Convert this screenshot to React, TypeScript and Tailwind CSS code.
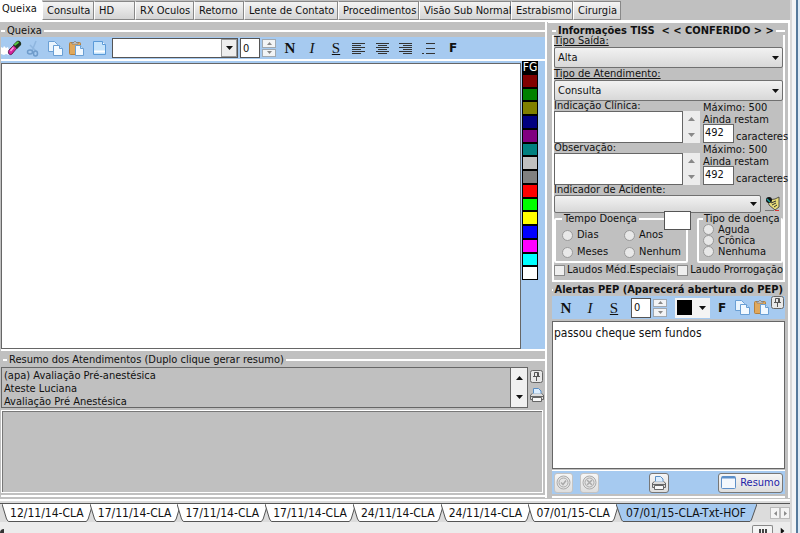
import React from "react";

const tabs = [
  ["Consulta", "w-[52px]"],
  ["HD", "w-[41px]"],
  ["RX Oculos", "w-[59px]"],
  ["Retorno", "w-[50px]"],
  ["Lente de Contato", "w-[94px]"],
  ["Procedimentos", "w-[81px]"],
  ["Visão Sub Normal", "w-[92px]"],
  ["Estrabismo", "w-[62px]"],
  ["Cirurgia", "w-[48px]"],
];

const palette = [
  "bg-[#800000]", "bg-[#008000]", "bg-[#808000]", "bg-[#000080]", "bg-[#800080]",
  "bg-[#008080]", "bg-[#c0c0c0]", "bg-[#808080]", "bg-[#ff0000]", "bg-[#00ff00]",
  "bg-[#ffff00]", "bg-[#0000ff]", "bg-[#ff00ff]", "bg-[#00ffff]", "bg-white",
];

const visits = [
  "12/11/14-CLA", "17/11/14-CLA", "17/11/14-CLA", "17/11/14-CLA",
  "24/11/14-CLA", "24/11/14-CLA", "07/01/15-CLA",
];

function CopyIcon() {
  return (
    <svg width="17" height="17" viewBox="0 0 17 17" stroke="#6a9fd4">
      <path d="M1.5 1.5h6l3 3v7h-9z" fill="#eaf4fd" />
      <path d="M6.5 5.5h6l3 3v7h-9z" fill="#f4faff" />
      <path d="M12.5 5.5v3h3" fill="#b9dcf8" />
    </svg>
  );
}

function PasteIcon() {
  return (
    <svg width="17" height="17" viewBox="0 0 17 17">
      <rect x="1.5" y="2.5" width="11" height="12" rx="1" fill="#e0a85c" stroke="#b5803c" />
      <path d="M4 4V2.5h2L7 1l1 1.5h2V4z" fill="#d8d8d8" stroke="#777" strokeWidth=".7" />
      <path d="M7.5 5.5h5l3 3v7h-8z" fill="#f1f8ff" stroke="#6a9fd4" />
      <path d="M12.5 5.5v3h3" fill="#b9dcf8" stroke="#6a9fd4" />
    </svg>
  );
}

function PinIcon() {
  return (
    <svg width="13" height="13" viewBox="0 0 13 13" fill="none" stroke="#555">
      <rect x=".5" y=".5" width="12" height="12" rx="2" fill="#e8e8e8" stroke="#666" />
      <path d="M4.5 2.5h4v4h-4zM3 6.5h7M6.5 7v4M7.5 3v3" />
    </svg>
  );
}

function PrinterIcon() {
  return (
    <svg width="16" height="16" viewBox="0 0 16 16" stroke="#666">
      <path d="M4.5 7V1.5h5l2.5 2.5v3z" fill="#dceeff" stroke="#5a8fc4" />
      <path d="M3.5 6.5L1.5 8v4.5h13V8l-2-1.5" fill="#dcdcdc" />
      <path d="M1.5 9.5h13" />
      <path d="M3.5 10.5h9v4h-9z" fill="#f8f8f8" />
    </svg>
  );
}

function EraserIcon() {
  return (
    <svg width="21" height="18" viewBox="0 0 21 18">
      <path d="M0 8l2 1 1-2 2 2 2-1 1 3-1 3 1 2-3-1-2 1-3-1z" fill="#fff" />
      <path d="M8 11l5-5 3 3-5 6c-2 2-5-1-3-4z" fill="#d6249c" stroke="#501040" strokeWidth=".8" />
      <path d="M12 6l4-4c2-1 5 1 4 4l-4 4z" fill="#223322" />
      <path d="M13.5 6l4-3" stroke="#58c83c" strokeWidth="2" />
      <path d="M9.5 12l3-3.5" stroke="#ff9ade" strokeWidth="1.5" />
    </svg>
  );
}

function ScissorsIcon() {
  return (
    <svg width="14" height="17" viewBox="0 0 14 17" fill="none" stroke="#6f9ccb" strokeWidth="1.5">
      <path d="M10 1L6 11M4 5l6 6" stroke="#8fb6df" />
      <ellipse cx="4" cy="12" rx="2.5" ry="2" />
      <ellipse cx="9.5" cy="13.5" rx="2" ry="2.5" />
    </svg>
  );
}

function PageIcon() {
  return (
    <svg width="15" height="16" viewBox="0 0 15 16" stroke="#5a9ad8">
      <path d="M1.5 1.5h9l3 3v10h-12z" fill="#c5e3fb" />
      <path d="M10.5 1.5v3h3" fill="#fff" />
      <path d="M2 11.5h11" stroke="#fff" strokeWidth="2" />
    </svg>
  );
}

function HandIcon() {
  return (
    <svg width="16" height="16" viewBox="0 0 16 16">
      <path d="M3 4l7-1 4-2v10l-4 3-6-5z" fill="#e8dc78" stroke="#333" strokeWidth=".8" />
      <path d="M6 7l5-2M7 9l4-2M9 11l3-2" stroke="#333" />
      <circle cx="4" cy="4" r="3" fill="#111" />
      <path d="M2 3l3 3" stroke="#18a0a0" strokeWidth="1.5" />
      <path d="M0 14.5h9" stroke="#777" />
      <path d="M10 14.5h4" stroke="#d33" />
    </svg>
  );
}

function SealIcon({ d }: { d: string }) {
  return (
    <svg width="15" height="15" viewBox="0 0 15 15" fill="none" stroke="#aaa">
      <circle cx="7.5" cy="7.5" r="6.5" fill="#e4e4e4" />
      <circle cx="7.5" cy="7.5" r="4.5" />
      <path d={d} strokeWidth="1.5" />
    </svg>
  );
}

function WindowIcon() {
  return (
    <svg width="15" height="13" viewBox="0 0 15 13">
      <rect x=".5" y=".5" width="14" height="12" rx="1" fill="#f4f8fd" stroke="#5d8fc8" />
      <path d="M1 1.5h13" stroke="#5d8fc8" strokeWidth="2" />
    </svg>
  );
}

function AlignIcon({ d }: { d: string }) {
  return (
    <svg width="13" height="13" viewBox="0 0 13 13" stroke="#333">
      <path d={d} />
    </svg>
  );
}

function Arrow({ up = false, small = false, light = false }: { up?: boolean; small?: boolean; light?: boolean }) {
  return (
    <svg width={small ? 5 : 7} height={small ? 3 : 4} viewBox="0 0 7 4" className={up ? "rotate-180" : ""}>
      <path d="M0 0h7L3.5 4z" fill={light ? "#888" : "#111"} />
    </svg>
  );
}

function Spinner() {
  return (
    <div className="flex h-[18px] w-[14px] flex-col gap-px">
      <button aria-label="Aumentar" className="flex flex-1 items-center justify-center border border-[#a0a8b0] bg-[#f2f4f6]"><Arrow up small light /></button>
      <button aria-label="Diminuir" className="flex flex-1 items-center justify-center border border-[#a0a8b0] bg-[#f2f4f6]"><Arrow small light /></button>
    </div>
  );
}

function Title({ children, bold = false }: { children: React.ReactNode; bold?: boolean }) {
  return (
    <div className="flex items-center gap-0.5">
      <span className="h-0.5 w-1 bg-white" />
      <h2 className={bold ? "leading-[13px] font-bold whitespace-pre" : "leading-[13px] whitespace-pre"}>{children}</h2>
      <span className="h-0.5 flex-1 bg-white" />
    </div>
  );
}

function Combo({ id, value, className }: { id: string; value: string; className: string }) {
  return (
    <div className={"relative " + className}>
      <select id={id} className="h-full w-full appearance-none rounded-[2px] border border-[#707070] bg-linear-to-b from-[#f2f2f2] to-[#d8d8d8] px-[3px]">
        <option>{value}</option>
      </select>
      <span className="pointer-events-none absolute inset-y-0 right-1 flex items-center"><Arrow /></span>
    </div>
  );
}

function Notes({ id, label }: { id: string; label: string }) {
  return (
    <div className="flex">
      <div className="flex w-[146px] shrink-0 flex-col">
        <label htmlFor={id} className="block h-[10px] leading-[10px]">{label}</label>
        <div className="flex h-8">
          <textarea id={id} className="min-w-0 flex-1 resize-none border border-[#666] bg-white" />
          <div className="flex w-[17px] flex-col items-center justify-between bg-[#ececec] py-1.5">
            <Arrow up light />
            <Arrow light />
          </div>
        </div>
      </div>
      <div className="ml-[3px] flex min-w-0 flex-1 flex-col whitespace-nowrap">
        <span className="h-3 leading-[14px]">Máximo: 500</span>
        <span className="h-[11px] leading-[13px]">Ainda restam</span>
        <label className="flex h-[19px] items-end gap-0.5 leading-3">
          <input defaultValue="492" className="h-[19px] w-[31px] shrink-0 border border-[#666] bg-white px-px pb-0.5" />
          caracteres
        </label>
      </div>
    </div>
  );
}

function Radio({ name, label }: { name: string; label: string }) {
  return (
    <label className="flex items-center gap-1">
      <input type="radio" name={name} className="size-[11px] appearance-none rounded-full border border-[#999] bg-[#e8e8e8] checked:bg-[#336]" />
      {label}
    </label>
  );
}

function Check({ label }: { label: string }) {
  return (
    <label className="flex items-center gap-0.5">
      <input type="checkbox" className="size-[11px] appearance-none border border-[#8a8a8a] bg-[#efefef] checked:bg-[#336]" />
      {label}
    </label>
  );
}

function VisitTab({ label, active = false }: { label: string; active?: boolean }) {
  return (
    <button className={active ? "relative h-[18px] w-[138px]" : "relative h-[18px] min-w-0 flex-1"}>
      <svg className="absolute inset-y-0 -left-px h-full w-[calc(100%+3px)]" viewBox="0 0 100 18" preserveAspectRatio="none">
        <path
          d={active ? "M0 0L4 16l1 1.5h90l1-1.5L100 0" : "M0 0L5 15l2 2.5h86l2-2.5L100 0"}
          fill={active ? "#a6caf0" : "#fff"}
          stroke="#555"
          vectorEffect="non-scaling-stroke"
        />
      </svg>
      <span className="relative whitespace-nowrap">{label}</span>
    </button>
  );
}

const letter = "w-[14px] text-center font-['Liberation_Serif',serif] text-[15px] leading-4";
const plate = "flex h-5 items-center justify-center rounded-[3px] border bg-linear-to-b from-[#f6f6f6] to-[#dedede]";

export default function App() {
  return (
    <div className="flex h-screen overflow-hidden bg-[#ececec] font-['DejaVu_Sans_Condensed','DejaVu_Sans',sans-serif] text-[11px] leading-3 text-[#111]">
      <div className="flex min-w-0 flex-1 flex-col">
        <nav className="flex h-[22px] items-start border-b-2 border-white bg-[#c0c0c0]">
          <button className="h-5 w-[42px] bg-white pb-0.5 pl-0.5 text-left">Queixa</button>
          {tabs.map(([label, width]) => (
            <button key={label} className={"mt-px h-[19px] border border-[#888] border-l-white bg-linear-to-b from-[#f4f4f4] to-[#d4d4d4] pl-1 text-left whitespace-nowrap " + width}>
              {label}
            </button>
          ))}
        </nav>

        <main className="flex min-h-0 flex-1 border-b-2 border-white bg-[#c0c0c0] pb-px">
          <section className="flex min-w-0 flex-1 flex-col border-r-2 border-white pl-px">
            <div className="pt-0.5"><Title>Queixa</Title></div>
            <div className="flex h-6 items-center border-b-2 border-white bg-[#a6caf0]">
              <button aria-label="Apagar"><EraserIcon /></button>
              <button aria-label="Recortar" className="ml-1"><ScissorsIcon /></button>
              <button aria-label="Copiar" className="ml-[7px]"><CopyIcon /></button>
              <button aria-label="Colar" className="ml-1"><PasteIcon /></button>
              <button aria-label="Página" className="ml-[7px]"><PageIcon /></button>
              <div className="relative ml-[5px] h-5 w-[126px]">
                <select aria-label="Fonte" className="h-full w-full appearance-none border border-[#555] bg-white"><option></option></select>
                <span className="pointer-events-none absolute inset-y-px right-px flex w-4 items-center justify-center border border-[#999] bg-[#eee]"><Arrow /></span>
              </div>
              <input aria-label="Tamanho" defaultValue="0" className="ml-0.5 h-5 w-5 border border-[#555] bg-white px-0.5" />
              <div className="ml-0.5"><Spinner /></div>
              <button className={"ml-[7px] font-bold " + letter}>N</button>
              <button className={"ml-2 italic " + letter}>I</button>
              <button className={"ml-2.5 underline " + letter}>S</button>
              <button aria-label="Esquerda" className="ml-[9px]"><AlignIcon d="M0 1.5h13M0 3.5h9M0 5.5h13M0 7.5h9M0 9.5h13M0 11.5h9" /></button>
              <button aria-label="Centro" className="ml-[11px]"><AlignIcon d="M0 1.5h13M2 3.5h9M0 5.5h13M2 7.5h9M0 9.5h13M2 11.5h9" /></button>
              <button aria-label="Direita" className="ml-2.5"><AlignIcon d="M0 1.5h13M4 3.5h9M0 5.5h13M4 7.5h9M0 9.5h13M4 11.5h9" /></button>
              <button aria-label="Lista" className="ml-2.5"><AlignIcon d="M4 1.5h9M4 6.5h9M4 11.5h9M0 11.5h2" /></button>
              <button className="ml-2.5 w-4 font-['DejaVu_Sans',sans-serif] text-[12px] font-bold">F</button>
            </div>
            <div className="flex min-h-0 flex-1 bg-[#a6caf0]">
              <div className="flex min-w-0 flex-1 pt-0.5">
                <textarea aria-label="Texto da queixa" className="min-w-0 flex-1 resize-none border border-[#666] bg-white" />
              </div>
              <div className="mr-[7px] ml-px flex h-[219px] w-4 flex-col bg-black">
                <span className="flex-1 text-center text-[12px] leading-[13px] text-white">FG</span>
                {palette.map((color) => (
                  <button key={color} aria-label="Cor" className={"flex-1 border border-black " + color} />
                ))}
              </div>
            </div>

            <div className="border-t-2 border-white pt-0.5 pl-0.5"><Title>Resumo dos Atendimentos (Duplo clique gerar resumo)</Title></div>
            <div className="mt-px flex h-[41px]">
              <ul className="min-w-0 flex-1 border border-r-0 border-[#666] pt-px pl-0.5 leading-[13px]">
                <li>(apa) Avaliação Pré-anestésica</li>
                <li>Ateste Luciana</li>
                <li>Avaliação Pré Anestésica</li>
              </ul>
              <div className="flex w-[18px] flex-col items-center justify-between border border-[#666] bg-[#f0f0f0] py-2">
                <Arrow up />
                <Arrow />
              </div>
              <div className="flex w-[17px] flex-col items-center gap-1 pt-[3px]">
                <button aria-label="Fixar"><PinIcon /></button>
                <button aria-label="Imprimir"><PrinterIcon /></button>
              </div>
            </div>
            <div className="mt-0.5 mr-0.5 border border-white">
              <div className="h-[81px] border-t border-l border-[#777]" />
            </div>
            <div className="mb-px h-1 border-b-2 border-white" />
          </section>

          <aside className="ml-px flex w-[242px] flex-col border-t border-r-2 border-white pr-[3px] pl-1">
            <section className="flex flex-col pt-px">
              <Title bold>Informações TISS  &lt; &lt; CONFERIDO &gt; &gt;</Title>
              <div className="-mt-0.5 flex flex-col border-x-2 border-white">
                <label htmlFor="saida" className="h-3 underline">Tipo Saída:</label>
                <Combo id="saida" value="Alta" className="h-[21px]" />
                <label htmlFor="atendimento" className="h-3 underline">Tipo de Atendimento:</label>
                <Combo id="atendimento" value="Consulta" className="h-[21px]" />
                <Notes id="indicacao" label="Indicação Clínica:" />
                <Notes id="observacao" label="Observação:" />
                <label htmlFor="acidente" className="h-[10px] leading-[10px]">Indicador de Acidente:</label>
                <div className="flex gap-1">
                  <Combo id="acidente" value="" className="h-[18px] w-[207px]" />
                  <button aria-label="Selecionar"><HandIcon /></button>
                </div>
                <div className="relative flex gap-[9px]">
                  <fieldset className="h-[50px] w-[134px] rounded-[2px] border-2 border-white pl-1.5">
                    <legend className="px-0.5">Tempo Doença</legend>
                    <div className="grid grid-cols-[62px_1fr] gap-y-[5px] pt-1">
                      <Radio name="tempo" label="Dias" />
                      <Radio name="tempo" label="Anos" />
                      <Radio name="tempo" label="Meses" />
                      <Radio name="tempo" label="Nenhum" />
                    </div>
                  </fieldset>
                  <fieldset className="h-[50px] min-w-0 flex-1 rounded-[2px] border-2 border-white pl-1 leading-[11px]">
                    <legend className="px-px whitespace-nowrap">Tipo de doença</legend>
                    <Radio name="tipo" label="Aguda" />
                    <Radio name="tipo" label="Crônica" />
                    <Radio name="tipo" label="Nenhuma" />
                  </fieldset>
                  <input aria-label="Tempo" className="absolute -top-0.5 left-[110px] h-[19px] w-[27px] border border-[#555] bg-white" />
                </div>
                <div className="flex justify-between pt-px pb-1 whitespace-nowrap">
                  <Check label="Laudos Méd.Especiais" />
                  <Check label="Laudo Prorrogação" />
                </div>
              </div>
            </section>

            <section className="flex min-h-0 flex-1 flex-col border-t-2 border-white pt-px">
              <Title bold>Alertas PEP (Aparecerá abertura do PEP)</Title>
              <div className="flex h-[23px] items-center bg-[#a6caf0]">
                <button className={"ml-[7px] font-bold " + letter}>N</button>
                <button className={"ml-2.5 italic " + letter}>I</button>
                <button className={"ml-2.5 underline " + letter}>S</button>
                <input aria-label="Tamanho do alerta" defaultValue="0" className="ml-2.5 h-5 w-5 border border-[#555] bg-white px-0.5" />
                <div className="ml-0.5"><Spinner /></div>
                <button aria-label="Cor do texto" className="ml-2 flex h-5 w-[35px] items-center justify-between bg-[#f4f4f4] pr-1 pl-0.5">
                  <span className="size-[15px] bg-black" />
                  <Arrow />
                </button>
                <button className="ml-1 w-4 font-['DejaVu_Sans',sans-serif] text-[12px] font-bold">F</button>
                <button aria-label="Copiar alerta" className="ml-1"><CopyIcon /></button>
                <button aria-label="Colar alerta" className="ml-0.5"><PasteIcon /></button>
                <button aria-label="Fixar alerta" className="ml-px self-start"><PinIcon /></button>
              </div>
              <textarea aria-label="Alertas" defaultValue="passou cheque sem fundos" className="mt-0.5 min-h-0 flex-1 resize-none border border-[#666] bg-white px-px pt-1 text-[12px] leading-[14px]" />
              <div className="mt-px flex h-6 items-center border-t border-white bg-[#a6caf0] px-0.5">
                <button aria-label="Confirmar" className={"w-[19px] border-[#c4c4c4] " + plate}><SealIcon d="M5 7.5l2 2 3-4" /></button>
                <button aria-label="Cancelar" className={"ml-[7px] w-[19px] border-[#c4c4c4] " + plate}><SealIcon d="M5 5l5 5M10 5l-5 5" /></button>
                <button aria-label="Imprimir alerta" className={"mx-auto w-5 border-[#777] " + plate}><PrinterIcon /></button>
                <button className={"w-[65px] gap-1 border-[#777] text-[#2222a8] " + plate}><WindowIcon />Resumo</button>
              </div>
              <div className="h-1 border-b-2 border-white" />
            </section>
          </aside>
        </main>

        <footer>
          <div className="flex items-start bg-[#dcdcdc] pt-0.5 text-[12px]">
            <div className="flex min-w-0 flex-1 border-t border-[#555] pl-[3px]">
              {visits.map((label, i) => (
                <VisitTab key={i} label={label} />
              ))}
              <VisitTab label="07/01/15-CLA-Txt-HOF" active />
              <div className="ml-[15px] flex items-center">
                <button aria-label="Abas anteriores" className="flex h-3 w-2.5 items-center justify-center border border-[#bbb] bg-[#f4f4f4]"><span className="rotate-90"><Arrow small light /></span></button>
                <button aria-label="Próximas abas" className="flex h-3 w-2.5 items-center justify-center border border-[#bbb] bg-[#f4f4f4]"><span className="-rotate-90"><Arrow small light /></span></button>
              </div>
            </div>
          </div>
          <div className="flex h-[11px] items-end bg-[#ececec]">
            <span className="h-1 w-1 rounded-tl-full bg-[#333]" />
            <button aria-label="Barra de rolagem" className="ml-auto flex h-2 w-[21px] items-end justify-center gap-px rounded-t-[2px] border border-b-0 border-[#888] bg-[#f4f4f4]">
              <span className="h-1 w-0.5 bg-[#444]" />
              <span className="h-1 w-0.5 bg-[#444]" />
              <span className="h-1 w-0.5 bg-[#444]" />
            </button>
            <span className="mr-1 ml-1.5 -rotate-90"><Arrow /></span>
          </div>
        </footer>
      </div>
      <div className="w-0.5 bg-[#d8d8d8]" />
      <div className="w-1 bg-[#f2f4f6]" />
      <div className="w-0.5 bg-[#557a9c]" />
      <div className="w-0.5 bg-[#dceaf6]" />
    </div>
  );
}
